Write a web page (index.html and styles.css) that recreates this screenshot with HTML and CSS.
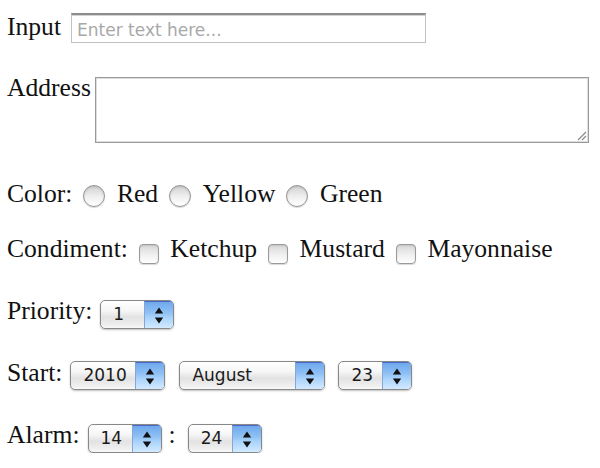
FILE: index.html
```html
<!DOCTYPE html>
<html>
<head>
<meta charset="utf-8">
<link rel="stylesheet" href="styles.css">
</head>
<body>
<form class="form">
  <div class="row row-input">
    <label class="lbl">Input</label>
    <input class="field" type="text" placeholder="Enter text here...">
  </div>
  <div class="row row-address">
    <label class="lbl">Address</label>
    <div class="area-wrap">
      <textarea class="area"></textarea>
      <svg class="grip" width="11" height="11" viewBox="0 0 11 11"><path d="M10 2 L2 10 M10 6 L6 10" stroke="#8a8a8a" stroke-width="1.2" fill="none"/></svg>
    </div>
  </div>
  <div class="row row-color">
    <span class="lbl">Color:</span>
    <input class="radio" type="radio" name="c"><span class="lbl">Red</span>
    <input class="radio" type="radio" name="c"><span class="lbl">Yellow</span>
    <input class="radio" type="radio" name="c"><span class="lbl">Green</span>
  </div>
  <div class="row row-cond">
    <span class="lbl">Condiment:</span>
    <input class="check" type="checkbox"><span class="lbl">Ketchup</span>
    <input class="check" type="checkbox"><span class="lbl">Mustard</span>
    <input class="check" type="checkbox"><span class="lbl">Mayonnaise</span>
  </div>
  <div class="row row-prio">
    <span class="lbl">Priority:</span>
    <div class="select w-prio"><span class="val">1</span><span class="btn"><svg width="10" height="17" viewBox="0 0 10 17"><path d="M5 0.5 L9.2 6.5 L0.8 6.5 Z M0.8 10.5 L9.2 10.5 L5 16.5 Z" fill="#111"/></svg></span></div>
  </div>
  <div class="row row-start">
    <span class="lbl">Start:</span>
    <div class="select w-year"><span class="val">2010</span><span class="btn"><svg width="10" height="17" viewBox="0 0 10 17"><path d="M5 0.5 L9.2 6.5 L0.8 6.5 Z M0.8 10.5 L9.2 10.5 L5 16.5 Z" fill="#111"/></svg></span></div>
    <div class="select w-month"><span class="val">August</span><span class="btn"><svg width="10" height="17" viewBox="0 0 10 17"><path d="M5 0.5 L9.2 6.5 L0.8 6.5 Z M0.8 10.5 L9.2 10.5 L5 16.5 Z" fill="#111"/></svg></span></div>
    <div class="select w-day"><span class="val">23</span><span class="btn"><svg width="10" height="17" viewBox="0 0 10 17"><path d="M5 0.5 L9.2 6.5 L0.8 6.5 Z M0.8 10.5 L9.2 10.5 L5 16.5 Z" fill="#111"/></svg></span></div>
  </div>
  <div class="row row-alarm">
    <span class="lbl">Alarm:</span>
    <div class="select w-hour"><span class="val">14</span><span class="btn"><svg width="10" height="17" viewBox="0 0 10 17"><path d="M5 0.5 L9.2 6.5 L0.8 6.5 Z M0.8 10.5 L9.2 10.5 L5 16.5 Z" fill="#111"/></svg></span></div>
    <span class="lbl colon">:</span>
    <div class="select w-min"><span class="val">24</span><span class="btn"><svg width="10" height="17" viewBox="0 0 10 17"><path d="M5 0.5 L9.2 6.5 L0.8 6.5 Z M0.8 10.5 L9.2 10.5 L5 16.5 Z" fill="#111"/></svg></span></div>
  </div>
</form>
</body>
</html>
```

FILE: styles.css
```css
html, body {
  margin: 0;
  padding: 0;
  background: #ffffff;
}

body {
  font-family: "Liberation Serif", "Times New Roman", serif;
  font-size: 25.6px;
  color: #111;
}

.form {
  padding: 13px 0 0 7px;
}

.row {
  display: flex;
  align-items: flex-start;
}

.lbl {
  line-height: 28px;
  white-space: nowrap;
}

/* text field */
.row-input {
  height: 30px;
}

.field {
  margin: 0 0 0 10px;
  width: 355px;
  height: 30px;
  box-sizing: border-box;
  padding: 2px 4px 0 5px;
  border: 1px solid #c2c2c2;
  border-top: 2px solid #8c8c8c;
  box-shadow: inset 0 1px 0 #d4d4d4;
  font-family: "DejaVu Sans", sans-serif;
  font-size: 17px;
  background: #fff;
  outline: none;
}

.field::placeholder {
  color: #a8a8a8;
}

/* textarea */
.row-address {
  margin-top: 31px;
}

.area-wrap {
  position: relative;
  margin: 3px 0 0 4px;
  width: 494px;
  height: 66px;
}

.area {
  display: block;
  width: 494px;
  height: 66px;
  box-sizing: border-box;
  margin: 0;
  border: 1px solid #9a9a9a;
  box-shadow: inset 0 0 0 1px #dedede;
  resize: none;
  outline: none;
  background: #fff;
}

.grip {
  position: absolute;
  right: 2px;
  bottom: 2px;
}

/* radios & checkboxes */
.row-color {
  margin-top: 37px;
}

.radio {
  appearance: none;
  -webkit-appearance: none;
  margin: 5px 12px 0 10.5px;
  width: 22px;
  height: 22px;
  box-sizing: border-box;
  border-radius: 50%;
  border: 1px solid #949494;
  background: linear-gradient(#d2d2d2, #f0f0f0 55%, #ffffff);
  box-shadow: 0 1px 1px rgba(0, 0, 0, 0.15), inset 0 1px 2px rgba(0, 0, 0, 0.12);
  flex: none;
}

.row-cond {
  margin-top: 27px;
}

.check {
  appearance: none;
  -webkit-appearance: none;
  margin: 9px 11.5px 0 11px;
  width: 20px;
  height: 20px;
  box-sizing: border-box;
  border-radius: 4px;
  border: 1px solid #9a9a9a;
  background: linear-gradient(#d8d8d8, #f0f0f0 55%, #ffffff);
  box-shadow: 0 1px 1px rgba(0, 0, 0, 0.15), inset 0 1px 2px rgba(0, 0, 0, 0.1);
  flex: none;
}

/* popup selects */
.row-prio {
  margin-top: 33px;
}

.row-start {
  margin-top: 30px;
}

.row-alarm {
  margin-top: 31px;
}

.select {
  display: flex;
  height: 29px;
  box-sizing: border-box;
  margin: 3px 0 0 8px;
  border: 1px solid #888;
  border-radius: 5px;
  overflow: hidden;
  background: linear-gradient(#ffffff, #f6f6f6 35%, #e2e2e2 60%, #f0f0f0 90%, #fafafa);
  box-shadow: 0 1px 2px rgba(0, 0, 0, 0.25);
  flex: none;
}

.row-start .select {
  margin-top: 2px;
}

.val {
  flex: 1;
  padding-left: 12px;
  font-family: "DejaVu Sans", sans-serif;
  font-size: 17px;
  line-height: 27px;
  color: #1a1a1a;
}

.btn {
  width: 29px;
  flex: none;
  display: flex;
  align-items: center;
  justify-content: center;
  box-sizing: border-box;
  border-left: 1px solid #86a6d6;
  border-top: 1px solid #4a68c8;
  background: linear-gradient(#6ea8ec, #8ec0f4 40%, #a9d3fb 60%, #d2eaff);
}

.w-prio { width: 74px; }
.w-year { width: 95px; }
.w-month { width: 146px; margin-left: 14px; }
.w-day { width: 74px; margin-left: 13px; }
.w-hour { width: 74px; }
.w-min { width: 74px; margin-left: 0; }

.colon {
  margin: 0 12px 0 7px;
}
```
